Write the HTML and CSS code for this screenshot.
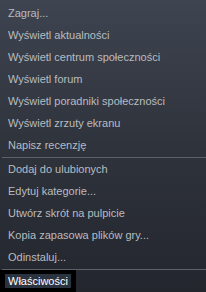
FILE: index.html
```html
<!DOCTYPE html>
<html lang="pl">
<head>
<meta charset="utf-8">
<link rel="stylesheet" href="styles.css">
</head>
<body>
<div class="menu">
  <div class="item">Zagraj...</div>
  <div class="item">Wyświetl aktualności</div>
  <div class="item">Wyświetl centrum społeczności</div>
  <div class="item">Wyświetl forum</div>
  <div class="item">Wyświetl poradniki społeczności</div>
  <div class="item">Wyświetl zrzuty ekranu</div>
  <div class="item">Napisz recenzję</div>
  <div class="sep"></div>
  <div class="item">Dodaj do ulubionych</div>
  <div class="item">Edytuj kategorie...</div>
  <div class="item">Utwórz skrót na pulpicie</div>
  <div class="item">Kopia zapasowa plików gry...</div>
  <div class="item">Odinstaluj...</div>
  <div class="sep"></div>
  <div class="item active"><span class="label">Właściwości</span></div>
</div>
</body>
</html>
```
FILE: styles.css
```css
html, body {
  margin: 0;
  padding: 0;
  background: #2a2e36;
}
.menu {
  width: 206px;
  height: 292px;
  overflow: hidden;
  padding-top: 2px;
  box-sizing: border-box;
  background: linear-gradient(to bottom, #3e4450 0%, #2f333c 50%, #23262d 100%);
  font-family: "Liberation Sans", Arial, sans-serif;
  font-size: 11px;
  color: #b8bcc0;
}
.item {
  height: 22px;
  line-height: 22px;
  padding-left: 8px;
  white-space: nowrap;
}
.sep {
  height: 1px;
  margin: 1px 0 0 2px;
  background: #5b606a;
}
.item.active {
  display: inline-block;
  background: #000;
  color: #fff;
  padding: 1px 5px 0 5px;
  height: 24px;
  line-height: 20px;
}
.label {
  background: #2b3340;
  padding: 1px 3px 1px 3px;
}
```
